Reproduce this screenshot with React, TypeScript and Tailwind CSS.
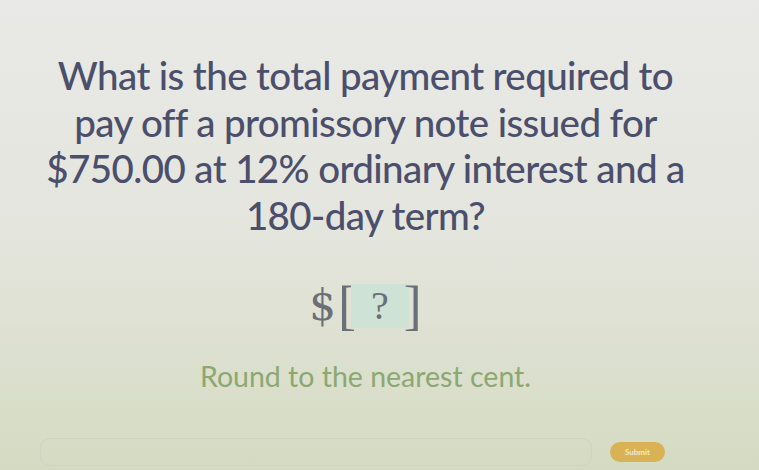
import { useState } from "react";

export default function App() {
  const [answer, setAnswer] = useState("");

  return (
    <div className="w-[759px] h-[470px] overflow-hidden bg-linear-to-b from-[#e9e9e7] via-[#e4e5dd] to-[#d5dbc2] flex flex-col font-['Lato',sans-serif]">
      <div className="flex flex-col items-center pr-[28px]">
        <p className="mt-[52px] whitespace-nowrap text-center text-[38.5px] leading-[46.5px] tracking-[-0.6px] font-medium text-[#4b4f6c]">
          What is the total payment required to
          <br />
          pay off a promissory note issued for
          <br />
          $750.00 at 12% ordinary interest and a
          <br />
          180-day term?
        </p>

        <div className="mt-[41px] flex items-center text-[#6b6f78]">
          <span className="font-['DejaVu_Serif',serif] text-[42px] leading-none">$</span>
          <span className="ml-[2px] flex items-center font-['Liberation_Serif',serif]">
            <span className="text-[54px] leading-none -mr-[5px]">[</span>
            <span className="bg-[#cfe2d6] px-[20px] h-[44px] flex items-center text-[40px] leading-none">?</span>
            <span className="text-[54px] leading-none -ml-[5px]">]</span>
          </span>
        </div>

        <p className="mt-[29px] text-[28.5px] leading-none text-[#8ba872]">Round to the nearest cent.</p>
      </div>

      <div className="mt-[47px] w-full pl-[40px] pr-[94px] flex items-center gap-[18px]">
        <input
          value={answer}
          onChange={(e) => setAnswer(e.target.value)}
          className="h-[28px] flex-1 rounded-[10px] border border-[#cfd3c0] bg-transparent outline-none"
        />
        <button className="h-[20px] w-[55px] rounded-full bg-[#d8b255] text-[8px] font-bold text-[#f3ead0]">
          Submit
        </button>
      </div>
    </div>
  );
}
